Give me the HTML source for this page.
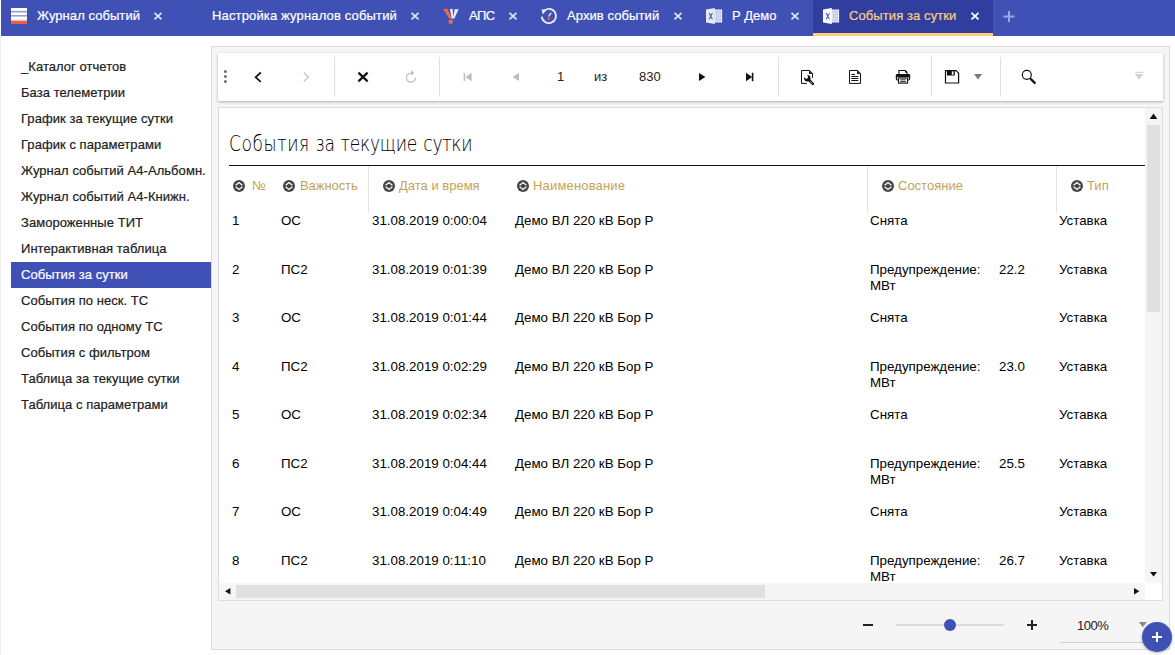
<!DOCTYPE html>
<html lang="ru">
<head>
<meta charset="utf-8">
<title>События за сутки</title>
<style>
html,body{margin:0;padding:0;}
body{width:1175px;height:655px;overflow:hidden;background:#fff;position:relative;
  font-family:"Liberation Sans",sans-serif;font-size:13px;color:#212121;}
.abs{position:absolute;}
#topbar{position:absolute;left:1px;top:0;width:1174px;height:36px;background:#3f51b5;}
.tt{position:absolute;top:8px;height:16px;line-height:16px;color:#fff;font-size:13px;white-space:nowrap;-webkit-text-stroke:0.2px currentColor;}
#side{position:absolute;left:0;top:36px;width:211px;height:619px;background:#fff;border-left:1px solid #eee;box-sizing:border-box;}
.li{position:absolute;left:10px;width:200px;height:26px;line-height:26px;font-size:13px;color:#212121;white-space:nowrap;letter-spacing:0.05px;-webkit-text-stroke:0.2px currentColor;}
.li span{position:absolute;left:10px;top:0;}
.li.sel{background:#3f51b5;color:#fff;}
#panel{position:absolute;left:211px;top:46px;width:959px;height:604px;background:#f5f5f5;border:1px solid #dcdcdc;box-sizing:border-box;}
#tb{position:absolute;left:218px;top:53px;width:945px;height:48px;background:#fff;box-shadow:0 1px 2.5px rgba(0,0,0,.3);}
.sep{position:absolute;top:4px;width:1px;height:40px;background:#e0e0e0;}
#viewer{position:absolute;left:218px;top:107px;width:945px;height:494px;background:#fff;border:1px solid #dcdcdc;box-sizing:border-box;}
.tbt{position:absolute;font-size:13px;color:#212121;top:16px;line-height:15px;}
.hd{position:absolute;top:178px;font-size:13px;color:#bfa456;line-height:15px;white-space:nowrap;}
.c{position:absolute;font-size:13.33px;color:#000;line-height:16px;white-space:nowrap;}
#title{position:absolute;left:229px;top:131px;font-family:"DejaVu Sans","Liberation Sans",sans-serif;font-weight:200;font-size:20.4px;line-height:26px;color:#000;white-space:nowrap;transform:scaleX(0.841);transform-origin:0 0;}
</style>
</head>
<body>

<div id="topbar">
<!-- hamburger -->
<svg class="abs" style="left:10px;top:8px" width="16" height="16" viewBox="0 0 16 16">
<rect x="0" y="0" width="16" height="12.5" fill="#fff"/>
<rect x="0" y="2.9" width="16" height="1.6" fill="#959fd8"/>
<rect x="0" y="7" width="16" height="1.6" fill="#959fd8"/>
<rect x="0" y="11.6" width="16" height="1.4" fill="#d9c6d8"/>
<rect x="0" y="13" width="16" height="3" fill="#e8613c"/>
</svg>
<div class="tt" style="left:36px;letter-spacing:0.06px">Журнал событий</div>
<svg class="abs" style="left:152px;top:11px" width="10" height="10" viewBox="0 0 10 10"><path d="M1.5 1.9 L8.5 8.3 M8.5 1.9 L1.5 8.3" stroke="#dfe3f5" stroke-width="1.8" fill="none"/></svg>
<div class="tt" style="left:211px;letter-spacing:0.15px">Настройка журналов событий</div>
<svg class="abs" style="left:409px;top:11px" width="10" height="10" viewBox="0 0 10 10"><path d="M1.5 1.9 L8.5 8.3 M8.5 1.9 L1.5 8.3" stroke="#dfe3f5" stroke-width="1.8" fill="none"/></svg>
<!-- APS icon -->
<svg class="abs" style="left:441px;top:8px" width="18" height="17" viewBox="0 0 18 17">
<path d="M1.2 0.9 L5.4 0.7 L9.6 10 L7.4 10.8 Z" fill="#ef6a46"/>
<circle cx="8.7" cy="13.8" r="2.2" fill="#ef6a46"/>
<path d="M7.9 1.1 L10.7 1.1 L11.1 10.4 L9.6 10.6 Z" fill="#e8eaf6"/>
<path d="M12.8 1.1 L16.7 1.3 L12.3 10.6 L10.7 10.5 Z" fill="#e8eaf6"/>
</svg>
<div class="tt" style="left:468px;letter-spacing:-0.55px">АПС</div>
<svg class="abs" style="left:507px;top:11px" width="10" height="10" viewBox="0 0 10 10"><path d="M1.5 1.9 L8.5 8.3 M8.5 1.9 L1.5 8.3" stroke="#dfe3f5" stroke-width="1.8" fill="none"/></svg>
<!-- history icon -->
<svg class="abs" style="left:538px;top:6px" width="20" height="20" viewBox="0 0 20 20">
<path d="M4.6 5.2 A7.1 7.1 0 1 1 2.8 10.6" stroke="#e8eaf6" stroke-width="1.9" fill="none"/>
<path d="M2.6 3.2 L7.6 3.9 L3.6 8.4 Z" fill="#e8eaf6"/>
<path d="M9.9 10 L12.2 6.9" stroke="#e8eaf6" stroke-width="1.4" fill="none"/>
<path d="M9.7 9.6 V13.8" stroke="#ef6a46" stroke-width="1.6" fill="none"/>
</svg>
<div class="tt" style="left:566px;letter-spacing:0.08px">Архив событий</div>
<svg class="abs" style="left:672px;top:11px" width="10" height="10" viewBox="0 0 10 10"><path d="M1.5 1.9 L8.5 8.3 M8.5 1.9 L1.5 8.3" stroke="#dfe3f5" stroke-width="1.8" fill="none"/></svg>
<svg class="abs" style="left:704px;top:7px" width="18" height="18" viewBox="0 0 18 18">
<rect x="9.5" y="2.5" width="7.6" height="13" fill="#f1f2fa"/>
<rect x="10.6" y="3.6" width="5.4" height="10.8" fill="#b7bde4"/>
<path d="M12.4 3.6v10.8M14.3 3.6v10.8M10.6 6.3h5.4M10.6 9h5.4M10.6 11.7h5.4" stroke="#eceefa" stroke-width="0.6" fill="none"/>
<path d="M1 2.5 L9.9 1 V17.1 L1 15.5 Z" fill="#e6e9f6"/>
<path d="M4.1 6 L7.4 12.2 M7.4 6 L4.1 12.2" stroke="#4a59b4" stroke-width="1.05" fill="none"/>
</svg>
<div class="tt" style="left:731px">Р Демо</div>
<svg class="abs" style="left:789px;top:11px" width="10" height="10" viewBox="0 0 10 10"><path d="M1.5 1.9 L8.5 8.3 M8.5 1.9 L1.5 8.3" stroke="#dfe3f5" stroke-width="1.8" fill="none"/></svg>
<div class="abs" style="left:812px;top:0;width:180px;height:36px;background:#303f9f;border-bottom:3px solid #ffcc80;box-sizing:border-box"></div>
<svg class="abs" style="left:821px;top:7px" width="18" height="18" viewBox="0 0 18 18">
<rect x="9.5" y="2.5" width="7.6" height="13" fill="#f1f2fa"/>
<rect x="10.6" y="3.6" width="5.4" height="10.8" fill="#b7bde4"/>
<path d="M12.4 3.6v10.8M14.3 3.6v10.8M10.6 6.3h5.4M10.6 9h5.4M10.6 11.7h5.4" stroke="#eceefa" stroke-width="0.6" fill="none"/>
<path d="M1 2.5 L9.9 1 V17.1 L1 15.5 Z" fill="#fff"/>
<path d="M4.1 6 L7.4 12.2 M7.4 6 L4.1 12.2" stroke="#4a59b4" stroke-width="1.05" fill="none"/>
</svg>
<div class="tt" style="left:848px;color:#ffcc80;letter-spacing:0.09px">События за сутки</div>
<svg class="abs" style="left:969px;top:11px" width="10" height="10" viewBox="0 0 10 10"><path d="M1.5 1.9 L8.5 8.3 M8.5 1.9 L1.5 8.3" stroke="#fff" stroke-width="1.8" fill="none"/></svg>
<svg class="abs" style="left:1001px;top:10px" width="14" height="14" viewBox="0 0 14 14"><path d="M7 1v11M1.5 6.5h11" stroke="#9fa8da" stroke-width="2" fill="none"/></svg>
</div>

<div id="side">
<div class="li" style="top:18px"><span>_Каталог отчетов</span></div>
<div class="li" style="top:44px"><span>База телеметрии</span></div>
<div class="li" style="top:70px"><span>График за текущие сутки</span></div>
<div class="li" style="top:96px"><span>График с параметрами</span></div>
<div class="li" style="top:122px"><span>Журнал событий А4-Альбомн.</span></div>
<div class="li" style="top:148px"><span>Журнал событий А4-Книжн.</span></div>
<div class="li" style="top:174px"><span>Замороженные ТИТ</span></div>
<div class="li" style="top:200px"><span>Интерактивная таблица</span></div>
<div class="li sel" style="top:226px"><span>События за сутки</span></div>
<div class="li" style="top:252px"><span>События по неск. ТС</span></div>
<div class="li" style="top:278px"><span>События по одному ТС</span></div>
<div class="li" style="top:304px"><span>События с фильтром</span></div>
<div class="li" style="top:330px"><span>Таблица за текущие сутки</span></div>
<div class="li" style="top:356px"><span>Таблица с параметрами</span></div>
</div>

<div id="panel"></div>
<div id="tb">
<svg class="abs" style="left:4px;top:16px" width="6" height="16" viewBox="0 0 6 16"><circle cx="3.4" cy="2.5" r="1.5" fill="#707070"/><circle cx="3.4" cy="7.6" r="1.5" fill="#707070"/><circle cx="3.4" cy="12.6" r="1.5" fill="#707070"/></svg>
<svg class="abs" style="left:33px;top:17px" width="14" height="14" viewBox="0 0 14 14"><path d="M9.8 2.5 L4.6 7.2 L9.8 11.9" stroke="#111" stroke-width="1.7" fill="none"/></svg>
<svg class="abs" style="left:81px;top:17px" width="14" height="14" viewBox="0 0 14 14"><path d="M4.8 2.6 L9.4 7 L4.8 11.4" stroke="#bdbdbd" stroke-width="1.2" fill="none"/></svg>
<div class="sep" style="left:116px"></div>
<svg class="abs" style="left:138px;top:17px" width="14" height="14" viewBox="0 0 14 14"><path d="M2.4 2.6 L11.6 11.4 M11.6 2.6 L2.4 11.4" stroke="#111" stroke-width="2.2" fill="none"/></svg>
<svg class="abs" style="left:186px;top:16px" width="14" height="16" viewBox="0 0 14 16"><path d="M8.6 4.3 A4.6 4.6 0 1 0 11.6 8.8" stroke="#bdbdbd" stroke-width="1.2" fill="none"/><path d="M7 1.2 L10.4 3.9 L7 6.4 Z" fill="#bdbdbd"/></svg>
<div class="sep" style="left:221px"></div>
<svg class="abs" style="left:245px;top:19px" width="10" height="10" viewBox="0 0 10 10"><rect x="0.6" y="0.8" width="1.5" height="8.4" fill="#bdbdbd"/><path d="M8.6 0.8 L2.4 5 L8.6 9.2 Z" fill="#bdbdbd"/></svg>
<svg class="abs" style="left:293px;top:19px" width="10" height="10" viewBox="0 0 10 10"><path d="M8 1 L1.6 5 L8 9 Z" fill="#bdbdbd"/></svg>
<div class="tbt" style="left:339px">1</div>
<div class="tbt" style="left:376px">из</div>
<div class="tbt" style="left:421px">830</div>
<svg class="abs" style="left:479px;top:19px" width="10" height="10" viewBox="0 0 10 10"><path d="M2 1 L8.4 5 L2 9 Z" fill="#111"/></svg>
<svg class="abs" style="left:527px;top:19px" width="10" height="10" viewBox="0 0 10 10"><rect x="6.8" y="0.8" width="1.6" height="8.4" fill="#111"/><path d="M1 0.8 L7.2 5 L1 9.2 Z" fill="#111"/></svg>
<div class="sep" style="left:560px"></div>
<!-- doc with wrench -->
<svg class="abs" style="left:582px;top:16px" width="16" height="17" viewBox="0 0 16 17">
<path d="M12.5 8.8 V4.3 L9.7 1.5 H1.5 V14.4 H6.8" fill="none" stroke="#111" stroke-width="1"/>
<path d="M9 1.6 V4.9 H12.3 Z" fill="#111"/>
<circle cx="7.3" cy="9.3" r="3.2" fill="#111"/>
<circle cx="6.3" cy="7.9" r="1.8" fill="#fff"/>
<path d="M6.3 7.9 L2.6 8.2 L5.6 4.2 Z" fill="#fff"/>
<path d="M9 11 L12.9 14.9" stroke="#111" stroke-width="2.6" stroke-linecap="round"/>
<path d="M10.2 12.2 L12.9 14.9" stroke="#fff" stroke-width="0.9" stroke-dasharray="0.9 0.7"/>
</svg>
<!-- doc -->
<svg class="abs" style="left:630px;top:16px" width="16" height="16" viewBox="0 0 16 16">
<path d="M1.5 1.5 H9.7 L12.5 4.3 V14.4 H1.5 Z" fill="#fff" stroke="#111" stroke-width="1"/>
<path d="M9 1.6 V4.9 H12.3 Z" fill="#111"/>
<path d="M3.3 5.5 H7 M3.3 7.5 H10.4 M3.3 9.5 H10.4 M3.3 11.5 H10.4" stroke="#111" stroke-width="1"/>
</svg>
<!-- print -->
<svg class="abs" style="left:677px;top:16px" width="16" height="16" viewBox="0 0 16 16">
<path d="M3.9 6 V1.5 H10.2 L12 3.3 V6" fill="#fff" stroke="#111" stroke-width="1.1"/>
<path d="M10 1.3 V3.5 H12.2 Z" fill="#111"/>
<rect x="1.4" y="5.6" width="13.2" height="5.4" rx="1.2" fill="#fff" stroke="#111" stroke-width="1.2"/>
<rect x="0.9" y="5.3" width="14.2" height="2.9" rx="0.8" fill="#111"/>
<rect x="3.5" y="9" width="9" height="5.1" fill="#fff" stroke="#111" stroke-width="1.1"/>
<path d="M5.2 10.8 H10.8 M5.2 12.6 H10.8" stroke="#111" stroke-width="0.9"/>
</svg>
<div class="sep" style="left:713px"></div>
<!-- save -->
<svg class="abs" style="left:726px;top:16px" width="16" height="16" viewBox="0 0 16 16">
<path d="M1.5 1.6 H12 L14.6 4.2 V14 H1.5 Z" fill="#fff" stroke="#111" stroke-width="1.2"/>
<rect x="3" y="1.6" width="7.8" height="4.9" fill="#111"/>
<rect x="7.8" y="2.4" width="1.7" height="3.3" fill="#fff"/>
</svg>
<svg class="abs" style="left:755px;top:20px" width="10" height="8" viewBox="0 0 10 8"><path d="M1 1 H9 L5 6.6 Z" fill="#7a7a7a"/></svg>
<div class="sep" style="left:782px"></div>
<!-- search -->
<svg class="abs" style="left:802px;top:15px" width="18" height="18" viewBox="0 0 18 18">
<circle cx="6.8" cy="6.8" r="4.5" fill="none" stroke="#111" stroke-width="1.15"/>
<path d="M10.2 10.4 L15.4 15.6" stroke="#111" stroke-width="2.2"/>
</svg>
<!-- filter -->
<svg class="abs" style="left:915px;top:18px" width="12" height="10" viewBox="0 0 12 10"><rect x="2" y="0.8" width="8.4" height="1.1" fill="#cfcfcf"/><path d="M2 3.1 H10.4 L6.2 9 Z" fill="#d4d4d4"/></svg>
</div>

<div id="viewer"></div>
<div id="title"><span style="letter-spacing:0.66px">События</span> за <span style="letter-spacing:-0.3px">текущие</span> <span style="letter-spacing:-0.36px;margin-left:1px">сутки</span></div>
<div class="abs" style="left:229px;top:165px;width:916px;height:1px;background:#111"></div>
<div class="abs" style="left:368px;top:166px;width:1px;height:47px;background:#e3e3e3"></div>
<div class="abs" style="left:867px;top:166px;width:1px;height:47px;background:#e3e3e3"></div>
<div class="abs" style="left:1056px;top:166px;width:1px;height:47px;background:#e3e3e3"></div>
<svg class="abs" style="left:233px;top:180px" width="12" height="12" viewBox="0 0 12 12"><circle cx="6" cy="6" r="6" fill="#444"/><path d="M2.6 5.3 L6 2.5 L9.4 5.3 M2.6 6.7 L6 9.5 L9.4 6.7" stroke="#fff" stroke-width="1.25" fill="none"/></svg><div class="hd" style="left:252px;letter-spacing:0px">№</div>
<svg class="abs" style="left:283px;top:180px" width="12" height="12" viewBox="0 0 12 12"><circle cx="6" cy="6" r="6" fill="#444"/><path d="M2.6 5.3 L6 2.5 L9.4 5.3 M2.6 6.7 L6 9.5 L9.4 6.7" stroke="#fff" stroke-width="1.25" fill="none"/></svg><div class="hd" style="left:300px;letter-spacing:-0.07px">Важность</div>
<svg class="abs" style="left:383px;top:180px" width="12" height="12" viewBox="0 0 12 12"><circle cx="6" cy="6" r="6" fill="#444"/><path d="M2.6 5.3 L6 2.5 L9.4 5.3 M2.6 6.7 L6 9.5 L9.4 6.7" stroke="#fff" stroke-width="1.25" fill="none"/></svg><div class="hd" style="left:399px;letter-spacing:0px">Дата и время</div>
<svg class="abs" style="left:517px;top:180px" width="12" height="12" viewBox="0 0 12 12"><circle cx="6" cy="6" r="6" fill="#444"/><path d="M2.6 5.3 L6 2.5 L9.4 5.3 M2.6 6.7 L6 9.5 L9.4 6.7" stroke="#fff" stroke-width="1.25" fill="none"/></svg><div class="hd" style="left:533px;letter-spacing:0.17px">Наименование</div>
<svg class="abs" style="left:882px;top:180px" width="12" height="12" viewBox="0 0 12 12"><circle cx="6" cy="6" r="6" fill="#444"/><path d="M2.6 5.3 L6 2.5 L9.4 5.3 M2.6 6.7 L6 9.5 L9.4 6.7" stroke="#fff" stroke-width="1.25" fill="none"/></svg><div class="hd" style="left:898px;letter-spacing:0px">Состояние</div>
<svg class="abs" style="left:1071px;top:180px" width="12" height="12" viewBox="0 0 12 12"><circle cx="6" cy="6" r="6" fill="#444"/><path d="M2.6 5.3 L6 2.5 L9.4 5.3 M2.6 6.7 L6 9.5 L9.4 6.7" stroke="#fff" stroke-width="1.25" fill="none"/></svg><div class="hd" style="left:1087px;letter-spacing:0px">Тип</div>
<div class="c" style="left:232px;top:213px">1</div><div class="c" style="left:281px;top:213px">ОС</div><div class="c" style="left:372px;top:213px">31.08.2019 0:00:04</div><div class="c" style="left:515px;top:213px">Демо ВЛ 220 кВ Бор Р</div><div class="c" style="left:870px;top:213px">Снята</div><div class="c" style="left:1059px;top:213px">Уставка</div>
<div class="c" style="left:232px;top:262px">2</div><div class="c" style="left:281px;top:262px">ПС2</div><div class="c" style="left:372px;top:262px">31.08.2019 0:01:39</div><div class="c" style="left:515px;top:262px">Демо ВЛ 220 кВ Бор Р</div><div class="c" style="left:870px;top:262px">Предупреждение:</div><div class="c" style="left:999px;top:262px">22.2</div><div class="c" style="left:870px;top:278px">МВт</div><div class="c" style="left:1059px;top:262px">Уставка</div>
<div class="c" style="left:232px;top:310px">3</div><div class="c" style="left:281px;top:310px">ОС</div><div class="c" style="left:372px;top:310px">31.08.2019 0:01:44</div><div class="c" style="left:515px;top:310px">Демо ВЛ 220 кВ Бор Р</div><div class="c" style="left:870px;top:310px">Снята</div><div class="c" style="left:1059px;top:310px">Уставка</div>
<div class="c" style="left:232px;top:359px">4</div><div class="c" style="left:281px;top:359px">ПС2</div><div class="c" style="left:372px;top:359px">31.08.2019 0:02:29</div><div class="c" style="left:515px;top:359px">Демо ВЛ 220 кВ Бор Р</div><div class="c" style="left:870px;top:359px">Предупреждение:</div><div class="c" style="left:999px;top:359px">23.0</div><div class="c" style="left:870px;top:375px">МВт</div><div class="c" style="left:1059px;top:359px">Уставка</div>
<div class="c" style="left:232px;top:407px">5</div><div class="c" style="left:281px;top:407px">ОС</div><div class="c" style="left:372px;top:407px">31.08.2019 0:02:34</div><div class="c" style="left:515px;top:407px">Демо ВЛ 220 кВ Бор Р</div><div class="c" style="left:870px;top:407px">Снята</div><div class="c" style="left:1059px;top:407px">Уставка</div>
<div class="c" style="left:232px;top:456px">6</div><div class="c" style="left:281px;top:456px">ПС2</div><div class="c" style="left:372px;top:456px">31.08.2019 0:04:44</div><div class="c" style="left:515px;top:456px">Демо ВЛ 220 кВ Бор Р</div><div class="c" style="left:870px;top:456px">Предупреждение:</div><div class="c" style="left:999px;top:456px">25.5</div><div class="c" style="left:870px;top:472px">МВт</div><div class="c" style="left:1059px;top:456px">Уставка</div>
<div class="c" style="left:232px;top:504px">7</div><div class="c" style="left:281px;top:504px">ОС</div><div class="c" style="left:372px;top:504px">31.08.2019 0:04:49</div><div class="c" style="left:515px;top:504px">Демо ВЛ 220 кВ Бор Р</div><div class="c" style="left:870px;top:504px">Снята</div><div class="c" style="left:1059px;top:504px">Уставка</div>
<div class="c" style="left:232px;top:553px">8</div><div class="c" style="left:281px;top:553px">ПС2</div><div class="c" style="left:372px;top:553px">31.08.2019 0:11:10</div><div class="c" style="left:515px;top:553px">Демо ВЛ 220 кВ Бор Р</div><div class="c" style="left:870px;top:553px">Предупреждение:</div><div class="c" style="left:999px;top:553px">26.7</div><div class="c" style="left:870px;top:569px">МВт</div><div class="c" style="left:1059px;top:553px">Уставка</div>

<div class="abs" style="left:1145px;top:108px;width:17px;height:475px;background:#f5f5f5"></div>
<div class="abs" style="left:1147px;top:125px;width:13px;height:187px;background:#e0e0e0"></div>
<svg class="abs" style="left:1148px;top:112px" width="11" height="9" viewBox="0 0 11 9"><path d="M5.5 1.6 L9.3 7 H1.7 Z" fill="#111"/></svg>
<svg class="abs" style="left:1148px;top:570px" width="11" height="9" viewBox="0 0 11 9"><path d="M2 2 H9 L5.5 6.6 Z" fill="#111"/></svg>
<div class="abs" style="left:219px;top:583px;width:926px;height:17px;background:#f5f5f5"></div>
<div class="abs" style="left:236px;top:585px;width:529px;height:13px;background:#e0e0e0"></div>
<svg class="abs" style="left:223px;top:586px" width="9" height="11" viewBox="0 0 9 11"><path d="M7.4 2 L2 5.3 L7.4 8.6 Z" fill="#111"/></svg>
<svg class="abs" style="left:1132px;top:586px" width="9" height="11" viewBox="0 0 9 11"><path d="M2 2 L7.4 5.3 L2 8.6 Z" fill="#111"/></svg>


<div class="abs" style="left:863px;top:624px;width:10px;height:2px;background:#222"></div>
<div class="abs" style="left:896px;top:624px;width:108px;height:2px;background:#dcdcdc"></div>
<div class="abs" style="left:944px;top:619px;width:12px;height:12px;border-radius:6px;background:#3f51b5"></div>
<div class="abs" style="left:1027px;top:624px;width:10px;height:2px;background:#222"></div>
<div class="abs" style="left:1031px;top:620px;width:2px;height:10px;background:#222"></div>
<div class="abs" style="left:1077px;top:618px;font-size:13px;line-height:16px;color:#212121;letter-spacing:-0.5px">100%</div>
<svg class="abs" style="left:1138px;top:621px" width="10" height="8" viewBox="0 0 10 8"><path d="M0.8 0.9 H8.8 L4.8 6.2 Z" fill="#8a8a8a"/></svg>
<div class="abs" style="left:1060px;top:642px;width:100px;height:1px;background:#d0d0d0"></div>
<div class="abs" style="left:1142px;top:622px;width:30px;height:30px;border-radius:15px;background:#3f51b5;box-shadow:0 1px 3px rgba(0,0,0,.3)"></div>
<div class="abs" style="left:1152px;top:636px;width:10px;height:2px;background:#fff"></div>
<div class="abs" style="left:1156px;top:632px;width:2px;height:10px;background:#fff"></div>

</body>
</html>
